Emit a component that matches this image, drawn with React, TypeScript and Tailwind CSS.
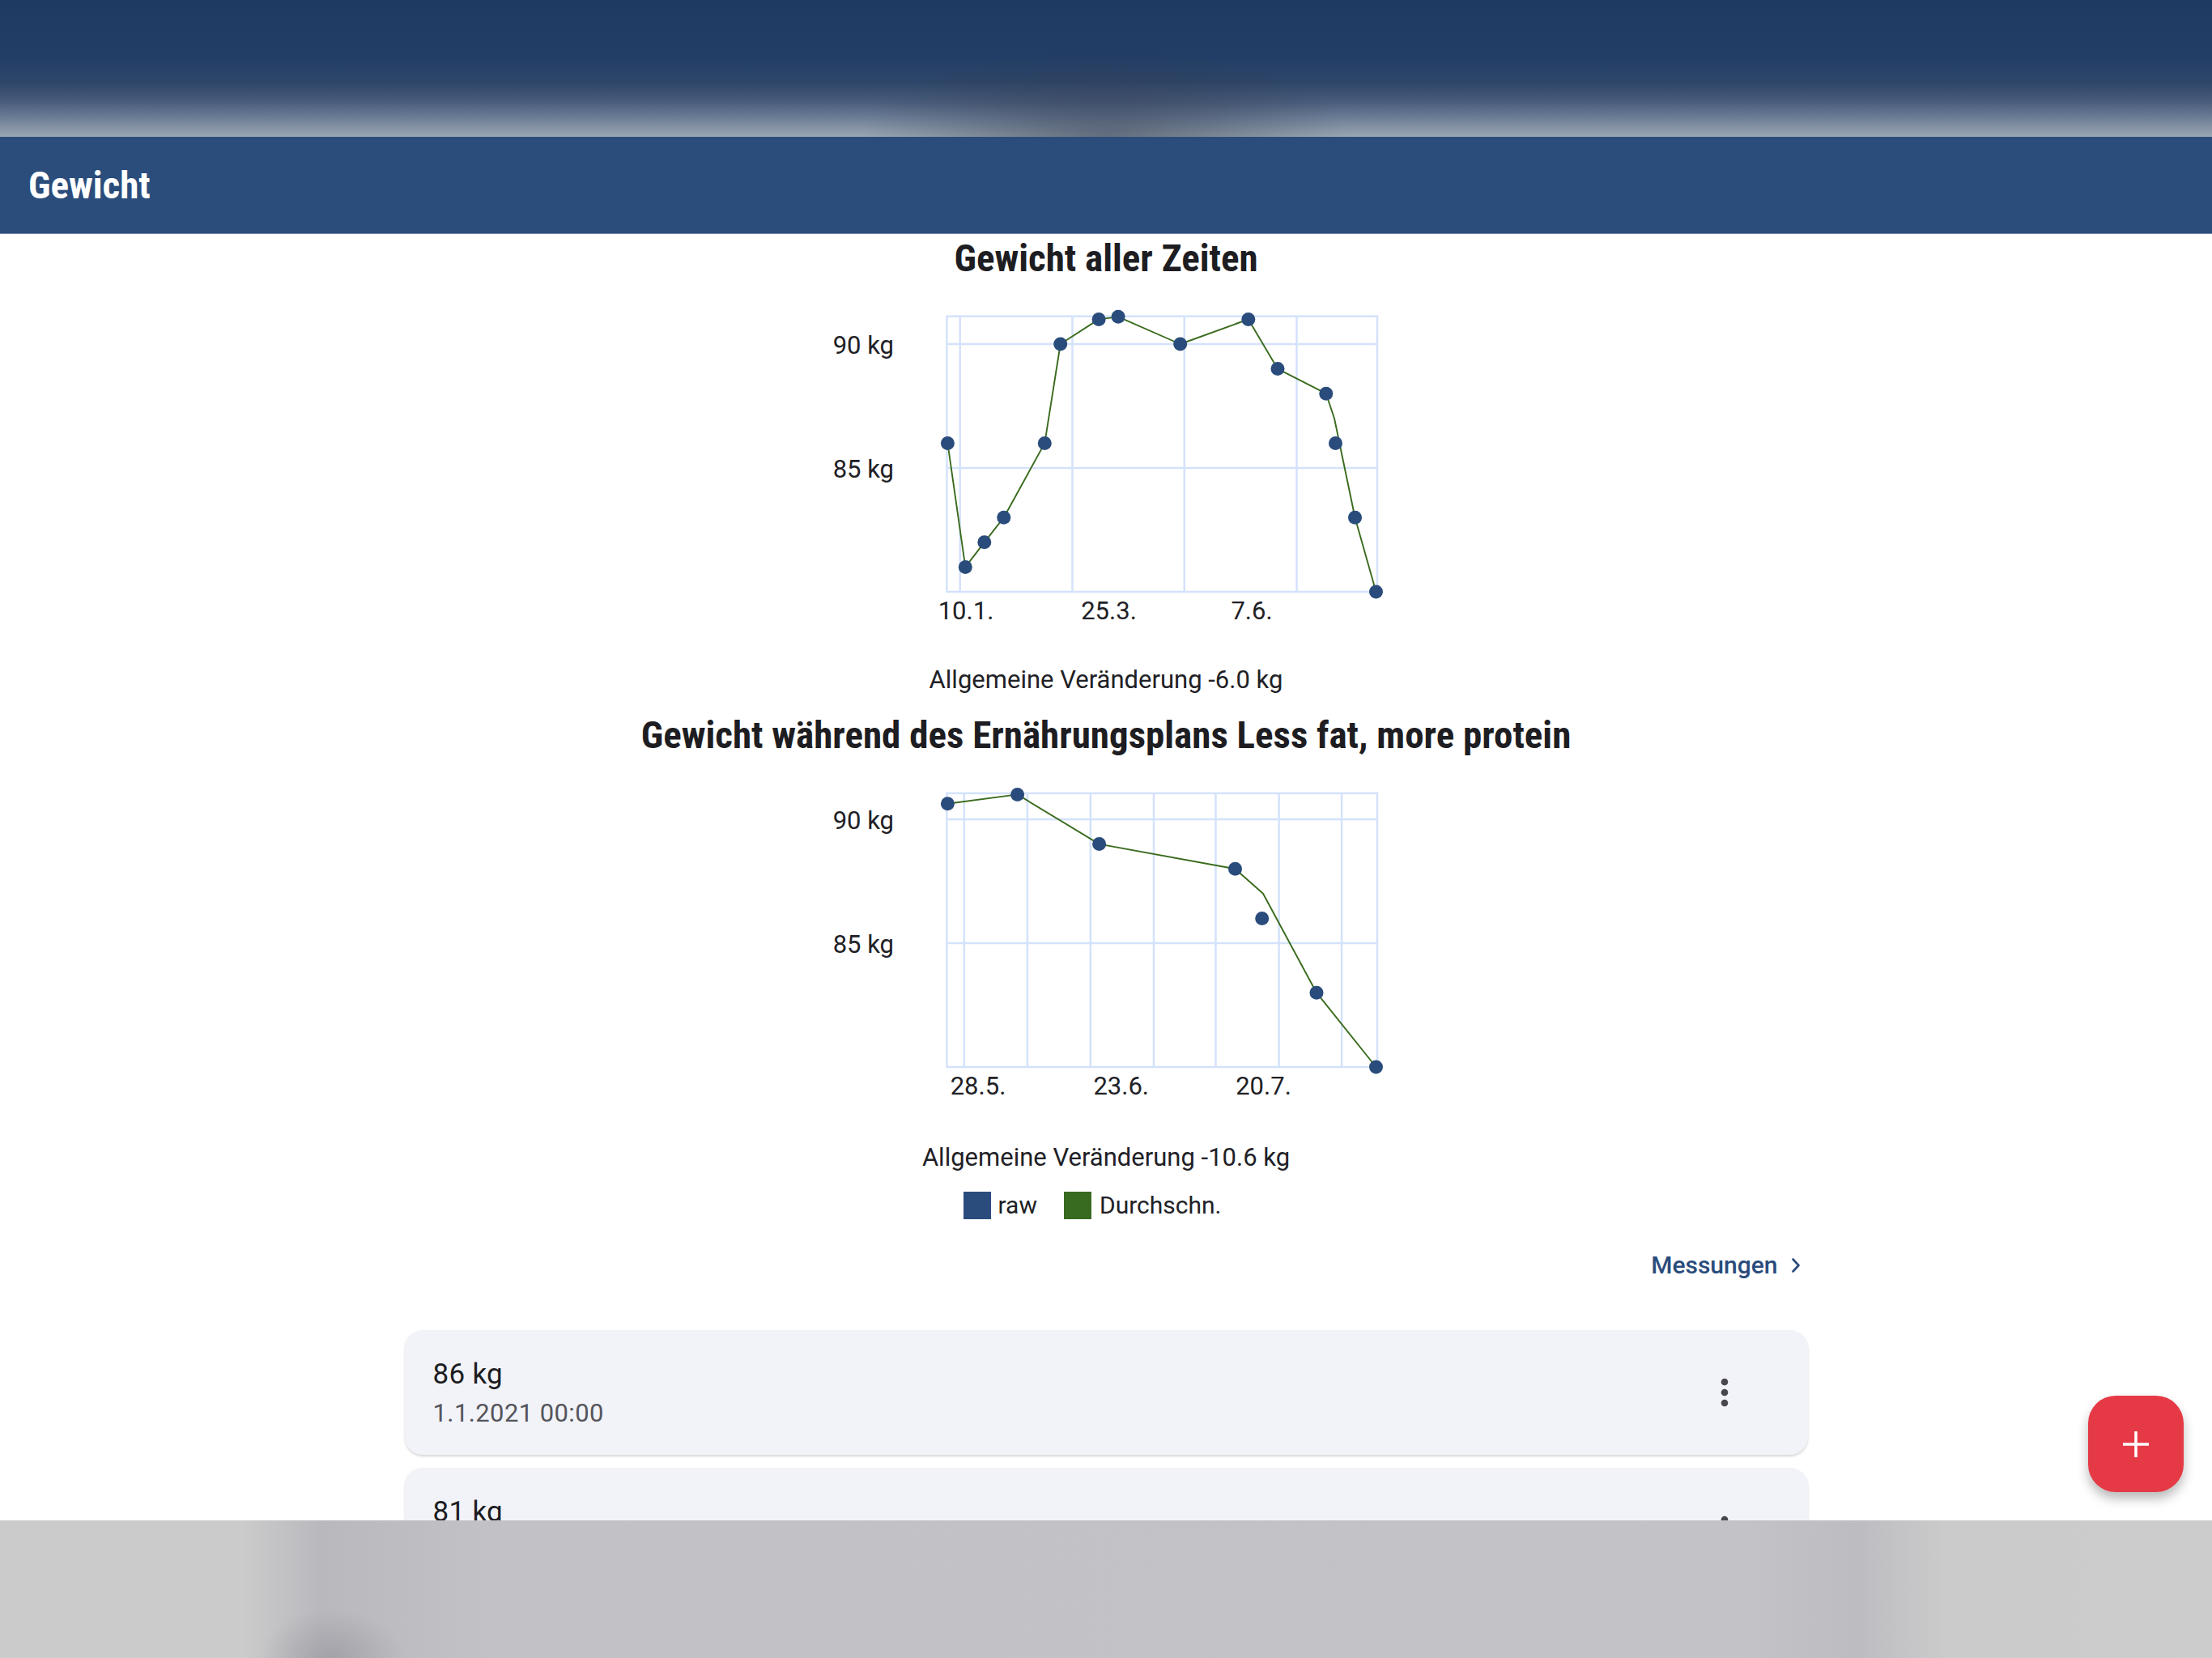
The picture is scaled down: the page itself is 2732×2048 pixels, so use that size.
import React from 'react';

const GRID = '#d4e2fb';
const BLUE = '#2a4c7c';
const GREEN = '#3a6b1e';
const PLOT_L = 153.4;
const PLOT_R = 685;
const Y90 = 44;
const PX_PER_KG = 30.6;

const yOf = (v: number) => Y90 + (90 - v) * PX_PER_KG;

type Point = [number, number]; // [x in svg px, value in kg]

interface ChartProps {
  maxV: number;
  vLines: number[];
  raw: Point[];
  avg: Point[];
  ticks: [string, number][];
}

function WeightChart({ maxV, vLines, raw, avg, ticks }: ChartProps) {
  const top = yOf(maxV);
  const bottom = yOf(80);
  return (
    <svg width={700} height={400} className="block shrink-0" fontFamily="Roboto, sans-serif">
      {/* grid */}
      <rect x={PLOT_L} y={top} width={PLOT_R - PLOT_L} height={bottom - top} fill="none" stroke={GRID} strokeWidth={2.5} />
      {[90, 85].map((v) => (
        <line key={v} x1={PLOT_L} x2={PLOT_R} y1={yOf(v)} y2={yOf(v)} stroke={GRID} strokeWidth={2.5} />
      ))}
      {vLines.map((x) => (
        <line key={x} x1={x} x2={x} y1={top} y2={bottom} stroke={GRID} strokeWidth={2.5} />
      ))}

      {/* average line */}
      <polyline
        points={avg.map(([x, v]) => `${x},${yOf(v)}`).join(' ')}
        fill="none"
        stroke={GREEN}
        strokeWidth={1.9}
        strokeLinejoin="round"
      />

      {/* raw points */}
      {raw.map(([x, v], i) => (
        <circle key={i} cx={x} cy={yOf(v)} r={8.5} fill={BLUE} />
      ))}

      {/* y axis */}
      {[90, 85].map((v) => (
        <text key={v} x={88} y={yOf(v) + 1} textAnchor="end" dominantBaseline="central" fontSize={31} fill="#212126">
          {v} kg
        </text>
      ))}

      {/* x axis */}
      {ticks.map(([label, x]) => (
        <text key={label} x={x} y={373} textAnchor="middle" dominantBaseline="central" fontSize={31} fill="#212126">
          {label}
        </text>
      ))}
    </svg>
  );
}

const allTimeRaw: Point[] = [
  [154.4, 86], [176.3, 81], [199.8, 82], [223.8, 83], [274.3, 86], [293.7, 90], [341.1, 91],
  [365.1, 91.1], [441.7, 90], [525.8, 91], [562, 89], [621.8, 88], [633.5, 86], [657.5, 83], [683.5, 80],
];
const allTimeAvg: Point[] = [
  [154.4, 86], [176.3, 81], [199.8, 82], [223.8, 83], [274.3, 86], [293.7, 90], [341.1, 91],
  [365.1, 91.1], [441.7, 90], [525.8, 91], [562, 89], [621.8, 88], [632, 87], [657.5, 83], [683.5, 80],
];

const planRaw: Point[] = [
  [154.4, 90.63], [240.6, 91], [341.6, 89], [509.5, 88], [542.7, 86], [610, 83], [683.5, 80],
];
const planAvg: Point[] = [
  [154.4, 90.63], [240.6, 91], [341.6, 89], [509.5, 88], [544, 87], [610, 83], [683.5, 80],
];

const titleFont =
  "font-['Roboto_Condensed','Liberation_Sans_Narrow','DejaVu_Sans_Condensed',Roboto,sans-serif] [font-stretch:condensed] font-bold";

function EntryCard({ weight, date }: { weight: string; date: string }) {
  return (
    <div className="w-[1733px] shrink-0 rounded-[22px] bg-[#f2f3f8] shadow-[0_2px_3px_rgba(0,0,0,0.16)] flex items-center justify-between pl-[35px] pr-[77px]">
      <div className="flex flex-col gap-[6px] pt-[33px] pb-[31px]">
        <span className="text-[35px] leading-[44px] text-[#1d1d22] tracking-[0.3px]">{weight}</span>
        <span className="text-[31px] leading-[40px] text-[#55555c] tracking-[0.4px]">{date}</span>
      </div>
      <svg width={52} height={52} viewBox="0 0 24 24" fill="#47474d">
        <circle cx={12} cy={6} r={2} />
        <circle cx={12} cy={12} r={2} />
        <circle cx={12} cy={18} r={2} />
      </svg>
    </div>
  );
}

export default function App() {
  return (
    <div className="relative w-[2732px] h-[2048px] overflow-hidden bg-white flex flex-col font-['Roboto',sans-serif] text-[#1d1d22]">
      {/* blurred status area */}
      <div className="h-[169px] shrink-0 [background-image:radial-gradient(ellipse_300px_120px_at_50%_100%,rgba(45,55,75,0.5),transparent),linear-gradient(to_bottom,#1f3a62_0%,#223e67_42%,#2e4669_60%,#4a5d7c_75%,#6f8098_87%,#9ba6b2_100%)]" />

      {/* app bar */}
      <header className="h-[120px] shrink-0 bg-[#2a4d7c] border-b border-[#6a83a5] flex items-center px-[35px]">
        <h1 className={`${titleFont} text-white text-[47px] leading-none`}>Gewicht</h1>
      </header>

      {/* content */}
      <main className="flex-1 min-h-0 overflow-hidden flex flex-col items-center">
        <h2 className={`${titleFont} mt-[4px] h-[52px] text-[47px] leading-[52px] text-[#1d1d22]`}>Gewicht aller Zeiten</h2>

        <div className="mt-[36px]">
          <WeightChart
            maxV={91.12}
            vLines={[169.7, 308.5, 446.8, 585.5]}
            raw={allTimeRaw}
            avg={allTimeAvg}
            ticks={[['10.1.', 177], ['25.3.', 353.5], ['7.6.', 530]]}
          />
        </div>

        <p className="mt-[39px] h-[40px] text-[31px] leading-[40px] text-[#212126]">Allgemeine Veränderung -6.0 kg</p>

        <h2 className={`${titleFont} mt-[22px] h-[52px] text-[47px] leading-[52px] text-[#1d1d22]`}>
          Gewicht während des Ernährungsplans Less fat, more protein
        </h2>

        <div className="mt-[34px]">
          <WeightChart
            maxV={91.05}
            vLines={[174.8, 252.9, 330.9, 409, 485.5, 563.6, 641.1]}
            raw={planRaw}
            avg={planAvg}
            ticks={[['28.5.', 192], ['23.6.', 368.7], ['20.7.', 544.5]]}
          />
        </div>

        <p className="mt-[42px] h-[40px] text-[31px] leading-[40px] text-[#212126]">Allgemeine Veränderung -10.6 kg</p>

        {/* legend */}
        <div className="mt-[19px] h-[40px] mr-[34px] flex items-center text-[30px] leading-[40px] text-[#212126]">
          <span className="w-[34px] h-[34px] bg-[#2a4c7c]" />
          <span className="ml-[9px]">raw</span>
          <span className="ml-[33px] w-[34px] h-[34px] bg-[#386a20]" />
          <span className="ml-[10px]">Durchschn.</span>
        </div>

        {/* link */}
        <div className="mt-[34px] w-[1733px] h-[40px] flex justify-end pr-[9px]">
          <button className="flex items-center gap-[16px] text-[30px] leading-[40px] font-medium text-[#2a4c7c]">
            Messungen
            <svg width={12} height={20} viewBox="0 0 12 20" fill="none" stroke="#2a4c7c" strokeWidth={2.6} strokeLinecap="round" strokeLinejoin="round">
              <path d="M2.5 2.5 L9.5 10 L2.5 17.5" />
            </svg>
          </button>
        </div>

        {/* entries */}
        <div className="mt-[60px] flex flex-col gap-[16px]">
          <EntryCard weight="86 kg" date="1.1.2021 00:00" />
          <EntryCard weight="81 kg" date="10.1.2021 00:00" />
        </div>
      </main>

      {/* blurred bottom area */}
      <div className="h-[170px] shrink-0 [background-image:radial-gradient(ellipse_90px_60px_at_15%_100%,rgba(140,140,148,0.5),transparent),linear-gradient(to_right,#cbcbcb_0%,#cbcbcb_11%,#b9b8bd_14.5%,#c2c1c6_22%,#c3c2c7_79%,#bdbcc1_84%,#cbcbcb_88%,#cccccc_100%)]" />

      {/* floating action button */}
      <button className="absolute right-[35px] bottom-[205px] w-[118px] h-[119px] rounded-[34px] bg-[#e63946] shadow-[0_8px_14px_rgba(0,0,0,0.28)] flex items-center justify-center">
        <svg width={34} height={34} viewBox="0 0 34 34" stroke="white" strokeWidth={3.6}>
          <path d="M17 1 V33 M1 17 H33" />
        </svg>
      </button>
    </div>
  );
}
